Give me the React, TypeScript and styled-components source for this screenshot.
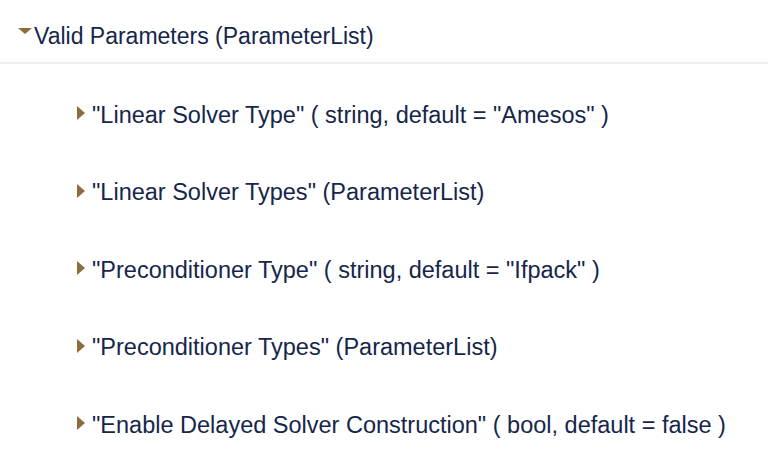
import React from 'react';
import styled, {createGlobalStyle} from 'styled-components';

const GlobalStyle = createGlobalStyle`
  html, body {
    margin: 0;
    padding: 0;
    background: #ffffff;
  }
  body {
    font-family: "Liberation Sans", Arial, Helvetica, sans-serif;
    color: #15264a;
  }
`;

const Tree = styled.div`
  width: 768px;
  height: 475px;
  overflow: hidden;
  background: #ffffff;
`;

const Header = styled.div`
  display: flex;
  align-items: center;
  height: 64px;
  padding: 10px 0 0 18px;
  box-sizing: border-box;
  border-bottom: 2px solid #efefef;
`;

const Label = styled.span<{ $size: number }>`
  font-size: ${(p) => p.$size}px;
  line-height: 26px;
  color: #15264a;
  white-space: nowrap;
`;

const DownArrow = styled.span`
  width: 0;
  height: 0;
  border-left: 7px solid transparent;
  border-right: 7px solid transparent;
  border-top: 6px solid #8c6d3f;
  margin-right: 2px;
  margin-top: -10px;
`;

const RightArrow = styled.span`
  width: 0;
  height: 0;
  border-top: 7px solid transparent;
  border-bottom: 7px solid transparent;
  border-left: 8px solid #8c6d3f;
  margin-right: 7px;
  margin-top: -3px;
`;

const List = styled.ul`
  list-style: none;
  margin: 0;
  padding: 12px 0 0 77px;
`;

const Item = styled.li`
  display: flex;
  align-items: center;
  height: 77.5px;
`;

interface Param {
    name: string;
    detail: string;
}

const params: Param[] = [
    {name: 'Linear Solver Type', detail: '( string, default = "Amesos" )'},
    {name: 'Linear Solver Types', detail: '(ParameterList)'},
    {name: 'Preconditioner Type', detail: '( string, default = "Ifpack" )'},
    {name: 'Preconditioner Types', detail: '(ParameterList)'},
    {name: 'Enable Delayed Solver Construction', detail: '( bool, default = false )'},
];

export default function App() {
    return (
        <>
            <GlobalStyle/>
            <Tree>
                <Header>
                    <DownArrow/>
                    <Label $size={23}>Valid Parameters (ParameterList)</Label>
                </Header>
                <List>
                    {params.map((p) => (
                        <Item key={p.name}>
                            <RightArrow/>
                            <Label $size={23.5}>"{p.name}" {p.detail}</Label>
                        </Item>
                    ))}
                </List>
            </Tree>
        </>
    );
}
